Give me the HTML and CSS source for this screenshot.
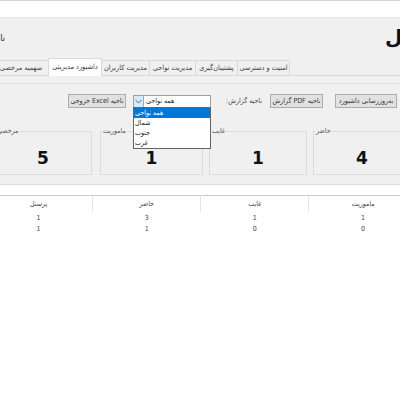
FILE: index.html
```html
<!DOCTYPE html>
<html lang="fa" dir="rtl">
<head>
<meta charset="utf-8">
<title>داشبورد مدیریتی</title>
<link rel="stylesheet" href="styles.css">
</head>
<body>
  <div class="topbar"></div>

  <div class="window">
    <header class="head">
      <div class="title" dir="ltr"><span dir="rtl">پنل</span></div>
      <div class="user">نام کاربر: مدیر سیستم</div>
    </header>

    <nav class="tabs">
      <div class="tab t-sec">امنیت و دسترسی</div>
      <div class="tab t-bak">پشتیبان‌گیری</div>
      <div class="tab t-reg">مدیریت نواحی</div>
      <div class="tab t-usr">مدیریت کاربران</div>
      <div class="tab t-dash active">داشبورد مدیریتی</div>
      <div class="tab t-leave">سهمیه مرخصی</div>
    </nav>

    <section class="page">
      <div class="toolbar">
        <button class="btn b-refresh">به‌روزرسانی داشبورد</button>
        <button class="btn b-pdf">ناحیه PDF گزارش</button>
        <span class="lbl">ناحیه گزارش:</span>
        <div class="combo">
          <div class="combo-box">
            <span class="combo-text">همه نواحی</span>
            <span class="combo-arrow">
              <svg width="7" height="5" viewBox="0 0 7 5"><path d="M0.5 1 L3.5 4 L6.5 1" fill="none" stroke="#444" stroke-width="0.8"/></svg>
            </span>
          </div>
          <ul class="combo-list">
            <li class="sel">همه نواحی</li>
            <li>شمال</li>
            <li>جنوب</li>
            <li>غرب</li>
          </ul>
        </div>
        <button class="btn b-excel">ناحیه Excel خروجی</button>
      </div>

      <div class="cards">
        <div class="card c1"><span class="card-title">حاضر</span><div class="card-num">4</div></div>
        <div class="card c2"><span class="card-title">غایب</span><div class="card-num">1</div></div>
        <div class="card c3"><span class="card-title">ماموریت</span><div class="card-num">1</div></div>
        <div class="card c4"><span class="card-title">مرخصی</span><div class="card-num">5</div></div>
      </div>
    </section>
  </div>

  <table class="grid">
    <thead>
      <tr><th>ماموریت</th><th>غایب</th><th>حاضر</th><th>پرسنل</th></tr>
    </thead>
    <tbody>
      <tr><td>1</td><td>1</td><td>3</td><td>1</td></tr>
      <tr><td>0</td><td>0</td><td>1</td><td>1</td></tr>
    </tbody>
  </table>
</body>
</html>
```

FILE: styles.css
```css
html, body {
  margin: 0;
  padding: 0;
}

body {
  width: 400px;
  height: 400px;
  overflow: hidden;
  background: #fff;
  font-family: "DejaVu Sans Condensed", "DejaVu Sans", sans-serif;
  font-size: 7px;
  color: #333;
}

/* window chrome strip */
.topbar {
  height: 18px;
  box-sizing: border-box;
  background: #fff;
  border-top: 1px solid #d6d6d6;
  border-bottom: 1px solid #e6e6e6;
}

.window {
  background: #f0f0f0;
}

/* header: title on the right, signed-in user on the left */
.head {
  height: 40px;
  display: flex;
  align-items: center;
  justify-content: space-between;
}

.title {
  width: 15px;
  overflow: hidden;
  white-space: nowrap;
  font-family: "DejaVu Sans", sans-serif;
  font-size: 20px;
  font-weight: bold;
  color: #111;
  line-height: 24px;
  margin-top: -3px;
}

.user {
  width: 5px;
  overflow: hidden;
  white-space: nowrap;
  font-size: 9px;
  color: #222;
}

/* tab strip */
.tabs {
  height: 17px;
  display: flex;
  align-items: flex-end;
  padding-right: 110px;
  border-bottom: 1px solid #dadada;
}

.tab {
  height: 15px;
  box-sizing: border-box;
  line-height: 14px;
  border: 1px solid #d9d9d9;
  border-bottom: none;
  margin-left: -1px;
  background: #f0f0f0;
  text-align: center;
  white-space: nowrap;
  overflow: hidden;
  flex-shrink: 0;
  font-size: 7.3px;
  color: #444;
}

.tab.active {
  height: 18px;
  line-height: 16px;
  background: #fff;
  position: relative;
  margin-bottom: -1px;
}

.t-sec { width: 53px; }
.t-bak { width: 43px; }
.t-reg { width: 47px; }
.t-usr { width: 49px; }
.t-dash { width: 54px; }
.t-leave { width: 56px; }

/* tab page */
.page {
  margin-top: 7px;
  border-top: 1px solid #e2e2e2;
  padding: 10px 3px 9px 0;
  border-bottom: 1px solid #dedede;
  margin-bottom: 10px;
}

.toolbar {
  display: flex;
  align-items: center;
  height: 14px;
}

.btn {
  height: 14px;
  box-sizing: border-box;
  padding: 0;
  margin: 0;
  border: 1px solid #adadad;
  background: #e1e1e1;
  font-family: inherit;
  font-size: 7px;
  color: #333;
  white-space: nowrap;
  overflow: hidden;
}

.b-refresh { width: 62px; }
.b-pdf { width: 53px; margin-right: 12px; }
.b-excel { width: 58px; margin-right: 7px; }

.lbl {
  width: 37px;
  margin-right: 8px;
  white-space: nowrap;
  color: #444;
}

/* region combo box with open list */
.combo {
  width: 78px;
  height: 13px;
  margin-right: 14px;
  position: relative;
}

.combo-box {
  height: 13px;
  box-sizing: border-box;
  display: flex;
  border: 1px solid #a0a0a0;
  background: #fff;
}

.combo-text {
  flex: 1;
  text-align: left;
  padding-left: 2px;
  line-height: 11px;
  color: #222;
}

.combo-arrow {
  width: 9px;
  background: #d8eaf9;
  border-right: 1px solid #7eb4ea;
  display: flex;
  align-items: center;
  justify-content: center;
}

.combo-list {
  position: absolute;
  top: 12px;
  left: 0;
  width: 78px;
  box-sizing: border-box;
  margin: 0;
  padding: 0;
  list-style: none;
  border: 1px solid #646464;
  background: #fff;
  z-index: 2;
}

.combo-list li {
  height: 10px;
  line-height: 10px;
  text-align: left;
  padding-left: 1px;
  color: #222;
}

.combo-list li.sel {
  background: #0078d7;
  color: #fff;
}

/* counter boxes */
.cards {
  display: flex;
  margin-top: 23px;
  margin-right: -14px;
}

.card {
  height: 44px;
  box-sizing: border-box;
  border: 1px solid #dcdcdc;
  flex-shrink: 0;
  display: flex;
  flex-direction: column;
  direction: ltr;
}

.c1 { width: 98px; }
.c2 { width: 98px; margin-right: 6px; }
.c3 { width: 103px; margin-right: 6px; }
.c4 { width: 98px; margin-right: 8px; }

.card-title {
  align-self: flex-start;
  margin: -6px 0 0 1px;
  padding: 0 1px;
  line-height: 10px;
  background: #f0f0f0;
  color: #555;
}

.card-num {
  flex: 1;
  display: flex;
  align-items: center;
  justify-content: center;
  padding-top: 5px;
  font-family: "DejaVu Sans", sans-serif;
  font-weight: bold;
  font-size: 17px;
  color: #111;
}

/* data grid */
.grid {
  border-collapse: collapse;
  table-layout: fixed;
  width: 433px;
  margin-right: -17px;
  border-top: 1px solid #c8c8c8;
  background: #fff;
}

.grid th {
  height: 16px;
  padding: 0;
  font-weight: normal;
  color: #444;
  border-left: 1px solid #e4e4e4;
  text-align: center;
}

.grid td {
  height: 11px;
  padding: 0;
  color: #444;
  text-align: center;
}
```
